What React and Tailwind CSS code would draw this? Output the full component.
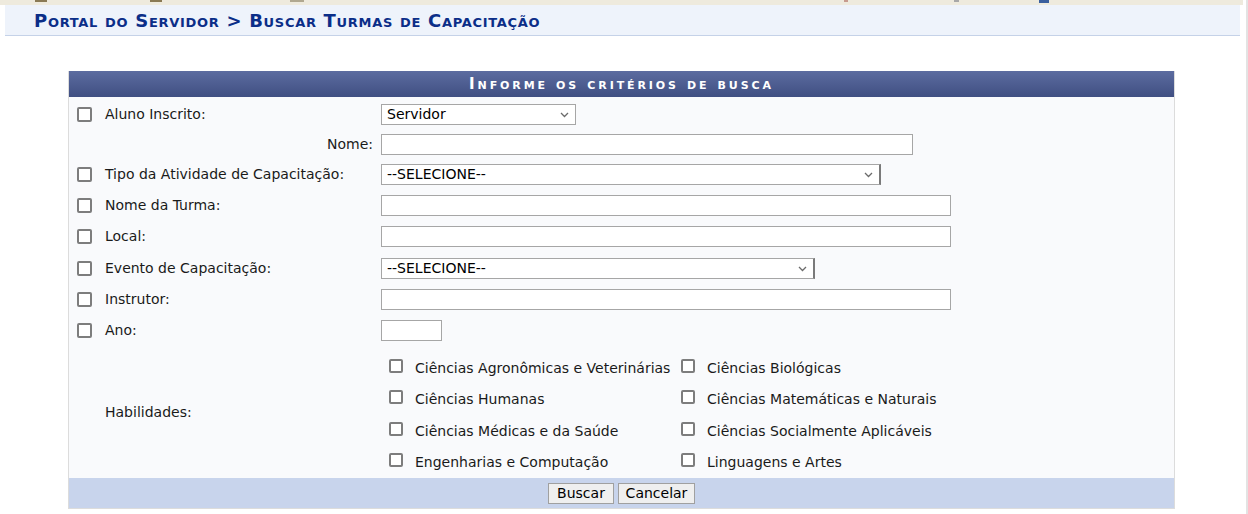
import React from "react";

const Checkbox = ({ className = "" }) => (
  <span className={"block shrink-0 border-2 border-[#7d7d7d] bg-white rounded-[2px] " + className} />
);

const Chevron = () => (
  <svg width="9" height="6" viewBox="0 0 9 6" className="shrink-0">
    <path d="M1 1 L4.5 4.5 L8 1" fill="none" stroke="#6b6b6b" strokeWidth="1.3" />
  </svg>
);

const Select = ({ w, text, dark }) => (
  <div
    className={
      "h-[21px] border border-[#a6a6a6] bg-white flex items-center justify-between pl-[5px] pr-[6px] text-[14px] text-black " +
      (dark ? "border-r-[#7a7a7a] border-r-2 " : "") +
      w
    }
  >
    <span>{text}</span>
    <Chevron />
  </div>
);

const Input = ({ w }) => <div className={"h-[21px] border border-[#a6a6a6] bg-white " + w} />;

const Row = ({ label, children, cls = "h-[31px]" }) => (
  <div className={"flex items-center " + cls}>
    <div className="w-[36px] pl-[8px]">
      <Checkbox className="w-[15px] h-[15px]" />
    </div>
    <div className="w-[276px] text-[14px] text-[#1a1a1a]">{label}</div>
    <div>{children}</div>
  </div>
);

const habs = [
  ["Ciências Agronômicas e Veterinárias", "Ciências Biológicas", "h-[31px]"],
  ["Ciências Humanas", "Ciências Matemáticas e Naturais", "h-[31px]"],
  ["Ciências Médicas e da Saúde", "Ciências Socialmente Aplicáveis", "h-[32px]"],
  ["Engenharias e Computação", "Linguagens e Artes", "h-[31px]"],
];

const Hab = ({ text, w }) => (
  <div className={"flex items-center " + w}>
    <Checkbox className="w-[14px] h-[14px] mb-[5px]" />
    <span className="ml-[12px] text-[14px] text-[#1a1a1a] whitespace-nowrap">{text}</span>
  </div>
);

export default function App() {
  return (
    <div className="w-[1248px] h-[514px] bg-white overflow-hidden flex font-['DejaVu_Sans','Verdana',sans-serif]">
      <div className="w-[1243px] flex flex-col">
        {/* top menu strip remnant */}
        <div className="h-[5px] bg-[#eeeadd] flex items-start">
          <span className="ml-[35px] w-[12px] h-[2px] bg-[#8a7a55]" />
          <span className="ml-[103px] w-[12px] h-[2px] bg-[#8a7a55]" />
          <span className="ml-[128px] w-[14px] h-[2px] bg-[#b0a890]" />
          <span className="ml-[540px] w-[4px] h-[2px] bg-[#c79b8f]" />
          <span className="ml-[106px] w-[5px] h-[2px] bg-[#a8a8a8]" />
          <span className="ml-[80px] w-[10px] h-[3px] bg-[#3a5f9e]" />
        </div>
        {/* header */}
        <div className="ml-[5px] w-[1235px] h-[31px] bg-[#eef3fb] border-b border-[#c5d2e8] flex items-center pl-[29px] pt-[2px]">
          <span className="text-[18px] font-bold text-[#0b2e88] [font-variant:small-caps] tracking-[0.7px] leading-none">
            Portal do Servidor &gt; Buscar Turmas de Capacitação
          </span>
        </div>
        <div className="h-[35px]" />
        {/* form table */}
        <div className="mx-auto w-[1107px] border border-[#dcdcdc] border-t-0 flex flex-col">
          <div className="h-[26px] bg-linear-to-b from-[#5c6ca0] to-[#404f82] flex items-center justify-center">
            <span className="text-white font-bold text-[15px] [font-variant:small-caps] tracking-[2.9px] leading-none">
              Informe os critérios de busca
            </span>
          </div>
          <div className="bg-[#f9fafc] flex flex-col">
            <Row label="Aluno Inscrito:" cls="h-[33px] pt-[2px]">
              <Select w="w-[195px]" text="Servidor" />
            </Row>
            <div className="flex items-center h-[29px]">
              <div className="w-[312px] pr-[8px] text-right text-[14px] text-[#1a1a1a]">Nome:</div>
              <Input w="w-[532px]" />
            </div>
            <Row label="Tipo da Atividade de Capacitação:">
              <Select w="w-[500px]" text="--SELECIONE--" dark />
            </Row>
            <Row label="Nome da Turma:">
              <Input w="w-[570px]" />
            </Row>
            <Row label="Local:">
              <Input w="w-[570px]" />
            </Row>
            <Row label="Evento de Capacitação:" cls="h-[32px] pt-[1px]">
              <Select w="w-[434px]" text="--SELECIONE--" dark />
            </Row>
            <Row label="Instrutor:" cls="h-[30px]">
              <Input w="w-[570px]" />
            </Row>
            <Row label="Ano:" cls="h-[31px] pt-[1px]">
              <Input w="w-[61px]" />
            </Row>
            <div className="flex items-center h-[133px]">
              <div className="w-[36px]" />
              <div className="w-[284px] text-[14px] text-[#1a1a1a] pt-[2px]">Habilidades:</div>
              <div className="flex flex-col pt-[8px]">
                {habs.map(([a, b, h]) => (
                  <div key={a} className={"flex " + h}>
                    <Hab text={a} w="w-[292px]" />
                    <Hab text={b} w="w-[270px]" />
                  </div>
                ))}
              </div>
            </div>
          </div>
          <div className="h-[30px] bg-[#c8d4ec] flex items-center justify-center gap-[4px]">
            <button className="h-[21px] w-[66px] border border-[#a0a0a0] bg-[#efefef] text-[14px] text-black leading-none">
              Buscar
            </button>
            <button className="h-[21px] w-[77px] border border-[#a0a0a0] bg-[#efefef] text-[14px] text-black leading-none">
              Cancelar
            </button>
          </div>
        </div>
      </div>
      <div className="w-[3px]" />
      <div className="w-[2px] bg-[#e3e3e3]" />
    </div>
  );
}
